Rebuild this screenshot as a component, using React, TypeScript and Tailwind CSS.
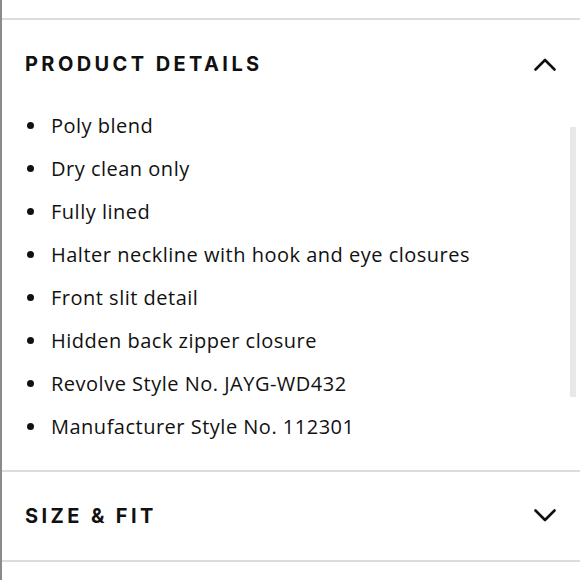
const details = [
  "Poly blend",
  "Dry clean only",
  "Fully lined",
  "Halter neckline with hook and eye closures",
  "Front slit detail",
  "Hidden back zipper closure",
  "Revolve Style No. JAYG-WD432",
  "Manufacturer Style No. 112301",
];

function Chevron({ up }: { up?: boolean }) {
  return (
    <svg viewBox="0 0 22 14" className="w-[22px] h-[14px]" fill="none" stroke="currentColor" strokeWidth={2.6} strokeLinecap="round" strokeLinejoin="round">
      {up ? <polyline points="1.5,12.5 11,3 20.5,12.5" /> : <polyline points="1.5,1.5 11,11 20.5,1.5" />}
    </svg>
  );
}

export default function App() {
  return (
    <div className="w-[580px] h-[580px] bg-white overflow-hidden border-l-2 border-[#8a8a8a] text-[#111]">
      <div className="h-[18px]" />
      {/* Product details (open) */}
      <section className="relative border-t-2 border-[#dcdcdc]">
        <div className="flex items-center justify-between h-[84px] pt-[4px] pl-[23px] pr-[24px]">
          <h2
            className="text-[20px] font-bold tracking-[0.17em]"
            style={{ fontFamily: "Inter, 'Liberation Sans', sans-serif" }}
          >
            PRODUCT DETAILS
          </h2>
          <Chevron up />
        </div>
        <ul className="pb-[22px]" style={{ fontFamily: "'Open Sans', 'Liberation Sans', sans-serif" }}>
          {details.map((d) => (
            <li key={d} className="flex items-center h-[43px] pl-[25px] text-[20px] tracking-[0.025em]">
              <span className="w-[7px] h-[7px] rounded-full bg-[#111] mr-[17px]" />
              {d}
            </li>
          ))}
        </ul>
        <div className="absolute right-[4px] top-[107px] w-[6px] h-[270px] bg-[#e8e8e8]" />
      </section>
      {/* Size & fit (closed) */}
      <section className="border-t-2 border-[#dcdcdc] border-b-2">
        <div className="flex items-center justify-between h-[88px] pl-[23px] pr-[24px]">
          <h2
            className="text-[20px] font-bold tracking-[0.17em]"
            style={{ fontFamily: "Inter, 'Liberation Sans', sans-serif" }}
          >
            SIZE &amp; FIT
          </h2>
          <Chevron />
        </div>
      </section>
    </div>
  );
}
